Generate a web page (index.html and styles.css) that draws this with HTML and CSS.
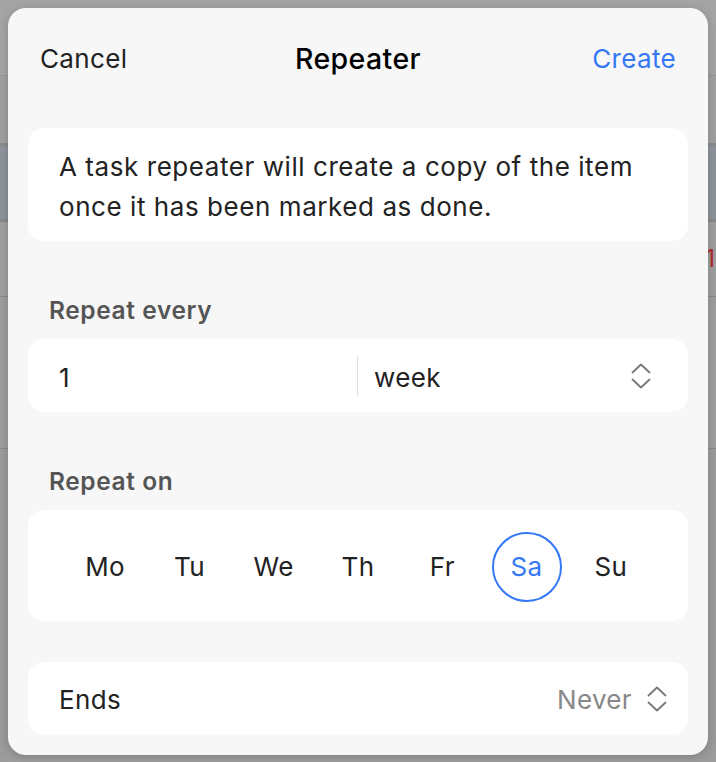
FILE: index.html
```html
<!DOCTYPE html>
<html>
<head>
<meta charset="utf-8">
<link rel="stylesheet" href="styles.css">
</head>
<body>
<div class="backdrop">
  <div class="bd-row bd-top"></div>
  <div class="bd-row bd-r2"></div>
  <div class="bd-row bd-band"></div>
  <div class="bd-row bd-r4"><span class="bd-badge">1</span></div>
  <div class="bd-row bd-r5"></div>
  <div class="bd-row bd-r6"></div>
</div>

<div class="sheet">
  <div class="header">
    <span class="hbtn cancel">Cancel</span>
    <span class="title">Repeater</span>
    <span class="hbtn create">Create</span>
  </div>

  <div class="card info">A task repeater will create a copy of the item once it has been marked as done.</div>

  <div class="label">Repeat every</div>
  <div class="card row every">
    <div class="num">1</div>
    <div class="divider"></div>
    <div class="unit">week</div>
    <svg class="chev" width="22" height="28" viewBox="0 0 22 28"><path d="M2.5 10.5 L11 2.5 L19.5 10.5 M2.5 17.5 L11 25.5 L19.5 17.5" fill="none" stroke="#777" stroke-width="1.8" stroke-linecap="round" stroke-linejoin="round"/></svg>
  </div>

  <div class="label">Repeat on</div>
  <div class="card days">
    <div class="day">Mo</div>
    <div class="day">Tu</div>
    <div class="day">We</div>
    <div class="day">Th</div>
    <div class="day">Fr</div>
    <div class="day"><span class="sel">Sa</span></div>
    <div class="day">Su</div>
  </div>

  <div class="card row ends">
    <div class="ends-label">Ends</div>
    <div class="never">Never</div>
    <svg class="chev" width="22" height="28" viewBox="0 0 22 28"><path d="M2.5 10.5 L11 2.5 L19.5 10.5 M2.5 17.5 L11 25.5 L19.5 17.5" fill="none" stroke="#777" stroke-width="1.8" stroke-linecap="round" stroke-linejoin="round"/></svg>
  </div>
</div>
</body>
</html>
```

FILE: styles.css
```css
html, body {
  margin: 0;
  padding: 0;
  height: 762px;
  overflow: hidden;
}
body {
  background: #9d9d9d;
  font-family: Inter, Roboto, "Liberation Sans", sans-serif;
  position: relative;
}
.backdrop {
  display: flex;
  flex-direction: column;
}
.bd-row { box-sizing: border-box; }
.bd-top { height: 76px; background: #a4a4a4; border-bottom: 1px solid #959595; }
.bd-r2 { height: 70px; background: #a0a0a0; border-bottom: 3px solid #8b8b8b; }
.bd-band { height: 76px; background: #8e929a; border-bottom: 3px solid #8a8a8a; }
.bd-r4 { height: 75px; background: #9f9f9f; border-bottom: 1px solid #8a8a8a; position: relative; }
.bd-badge {
  position: absolute;
  right: 1px;
  top: 22px;
  color: #b02a2a;
  font-size: 24px;
}
.bd-r5 { height: 152px; background: #9e9e9e; border-bottom: 1px solid #8a8a8a; }
.bd-r6 { height: 310px; background: #9b9b9b; }

.sheet {
  position: absolute;
  top: 8px;
  left: 8px;
  width: 700px;
  height: 747px;
  box-sizing: border-box;
  background: #f7f7f7;
  border-radius: 18px;
  box-shadow: 0 2px 10px rgba(0,0,0,0.18);
  padding: 0 20px 20px;
  display: flex;
  flex-direction: column;
  letter-spacing: 0.35px;
}
.header {
  height: 100px;
  margin-bottom: 20px;
  display: flex;
  align-items: center;
  justify-content: space-between;
  padding: 0 12px;
  position: relative;
}
.hbtn { font-size: 26px; color: #222; }
.create { color: #3478f6; }
.title {
  position: absolute;
  left: 0;
  right: 0;
  text-align: center;
  font-size: 28.5px;
  font-weight: 500;
  letter-spacing: 0.4px;
  color: #000;
}
.card {
  background: #fff;
  border-radius: 16px;
  box-sizing: border-box;
}
.info {
  height: 113px;
  padding: 19px 31px 0;
  font-size: 26px;
  line-height: 40px;
  letter-spacing: 0.56px;
  color: #222;
}
.label {
  height: 98px;
  box-sizing: border-box;
  padding: 55px 21px 0;
  font-size: 24.5px;
  line-height: 28px;
  font-weight: 600;
  letter-spacing: 0.6px;
  color: #555;
}
.row {
  height: 73px;
  display: flex;
  align-items: center;
  padding: 3px 36px 0 31px;
  font-size: 26px;
  color: #222;
}
.num { width: 298px; }
.divider {
  width: 1px;
  height: 40px;
  background: #ddd;
  margin-right: 16px;
  margin-top: -3px;
}
.unit { flex: 1; }
.chev { display: block; margin-top: -3px; }
.days {
  height: 111px;
  display: grid;
  grid-template-columns: repeat(7, 1fr);
  align-items: center;
  padding: 2px 35px 0;
}
.day {
  display: flex;
  justify-content: center;
  align-items: center;
  font-size: 26px;
  color: #222;
}
.sel {
  width: 66px;
  height: 66px;
  border: 2px solid #3478f6;
  border-radius: 50%;
  display: flex;
  align-items: center;
  justify-content: center;
  color: #3478f6;
}
.ends {
  margin-top: 41px;
  padding-top: 2px;
  padding-right: 20px;
}
.ends .chev { margin-top: -2px; }
.ends-label { flex: 1; }
.never { color: #888; margin-right: 14px; }
```
